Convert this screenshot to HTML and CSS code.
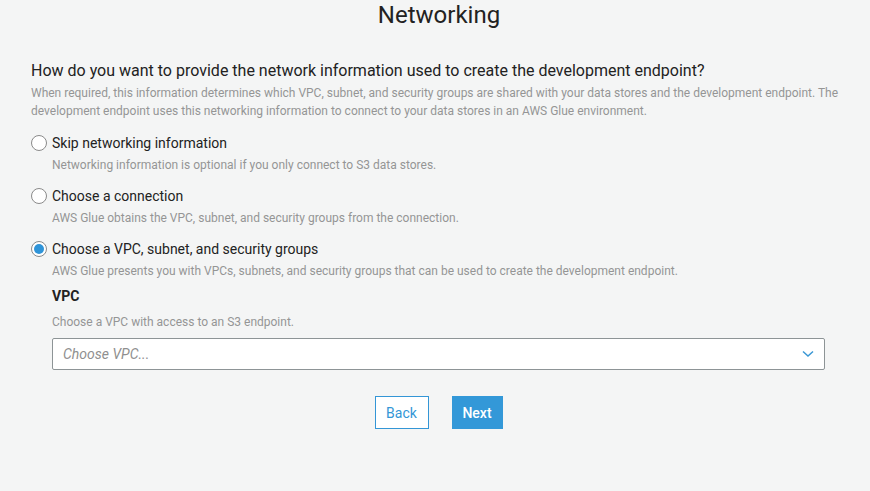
FILE: index.html
```html
<!DOCTYPE html>
<html lang="en">

<head>
    <meta charset="UTF-8">
    <meta name="viewport" content="width=device-width, initial-scale=1.0">
    <title>Networking</title>
    <link rel="stylesheet" href="styles.css">
</head>

<body>
    <h1 class="page-title">Networking</h1>

    <div class="section">
        <h2 class="question">How do you want to provide the network information used to create the development endpoint?</h2>
        <p class="description">When required, this information determines which VPC, subnet, and security groups are shared with your data stores and the development endpoint. The development endpoint uses this networking information to connect to your data stores in an AWS Glue environment.</p>

        <div class="options">
            <label class="option">
                <span class="radio"></span>
                <span class="option-label">Skip networking information</span>
            </label>
            <p class="option-help">Networking information is optional if you only connect to S3 data stores.</p>

            <label class="option">
                <span class="radio"></span>
                <span class="option-label">Choose a connection</span>
            </label>
            <p class="option-help">AWS Glue obtains the VPC, subnet, and security groups from the connection.</p>

            <label class="option">
                <span class="radio checked"></span>
                <span class="option-label">Choose a VPC, subnet, and security groups</span>
            </label>
            <p class="option-help">AWS Glue presents you with VPCs, subnets, and security groups that can be used to create the development endpoint.</p>

            <div class="vpc-field">
                <div class="field-label">VPC</div>
                <p class="field-help">Choose a VPC with access to an S3 endpoint.</p>
                <div class="select">
                    <span class="placeholder">Choose VPC...</span>
                    <svg class="caret" width="12" height="8" viewBox="0 0 12 8">
                        <path d="M1 1.5 L6 6 L11 1.5" fill="none" stroke="#3a97d4" stroke-width="1.5" />
                    </svg>
                </div>
            </div>
        </div>

        <div class="actions">
            <button class="btn btn-back">Back</button>
            <button class="btn btn-next">Next</button>
        </div>
    </div>
</body>

</html>
```

FILE: styles.css
```css
body {
    margin: 0;
    padding: 0;
    background-color: #f4f5f5;
    font-family: Roboto, "Liberation Sans", Arial, sans-serif;
    color: #222;
}

.page-title {
    margin: 0;
    text-align: center;
    font-size: 24px;
    font-weight: 400;
    line-height: 30px;
    color: #222;
    padding-left: 8px;
}

.section {
    width: 811px;
    margin: 30px 0 0 31px;
}

.question {
    margin: 0;
    font-size: 16px;
    font-weight: 400;
    line-height: 22px;
}

.description {
    margin: 2px 0 0;
    font-size: 12px;
    line-height: 18px;
    color: #959595;
}

.options {
    margin-top: 13px;
}

.option {
    display: flex;
    align-items: center;
    height: 20px;
    cursor: pointer;
}

.option-label {
    font-size: 14px;
    line-height: 20px;
    color: #222;
    margin-left: 5px;
}

.radio {
    width: 16px;
    height: 16px;
    border: 1px solid #8a8a8a;
    border-radius: 50%;
    background-color: #fff;
    box-sizing: border-box;
    position: relative;
}

.radio.checked::after {
    content: "";
    position: absolute;
    left: 2px;
    top: 2px;
    width: 10px;
    height: 10px;
    border-radius: 50%;
    background-color: #2f94d8;
}

.option-help {
    margin: 3px 0 12px 21px;
    font-size: 12px;
    line-height: 18px;
    color: #959595;
}

.options .option-help:last-of-type {
    margin-bottom: 0;
}

.vpc-field {
    margin: 6px 17px 0 21px;
}

.field-label {
    font-size: 14px;
    font-weight: 700;
    line-height: 20px;
}

.field-help {
    margin: 7px 0 0;
    font-size: 12px;
    line-height: 18px;
    color: #959595;
}

.select {
    margin-top: 7px;
    height: 32px;
    box-sizing: border-box;
    border: 1px solid #8d9496;
    border-radius: 2px;
    background-color: #fff;
    display: flex;
    align-items: center;
    justify-content: space-between;
    padding: 0 10px;
}

.placeholder {
    font-style: italic;
    font-size: 14px;
    color: #8f8f8f;
}

.actions {
    display: flex;
    justify-content: center;
    gap: 23px;
    margin-top: 26px;
    padding-left: 4px;
}

.btn {
    height: 33px;
    font-family: Roboto, "Liberation Sans", Arial, sans-serif;
    font-size: 14px;
    border-radius: 0;
    cursor: pointer;
}

.btn-back {
    width: 54px;
    background-color: #fff;
    border: 1px solid #3496d6;
    color: #3496d6;
}

.btn-next {
    width: 51px;
    background-color: #3398d8;
    border: none;
    color: #fff;
    font-weight: 500;
}

.btn-next:hover {
    background-color: #2b86c2;
}
```
